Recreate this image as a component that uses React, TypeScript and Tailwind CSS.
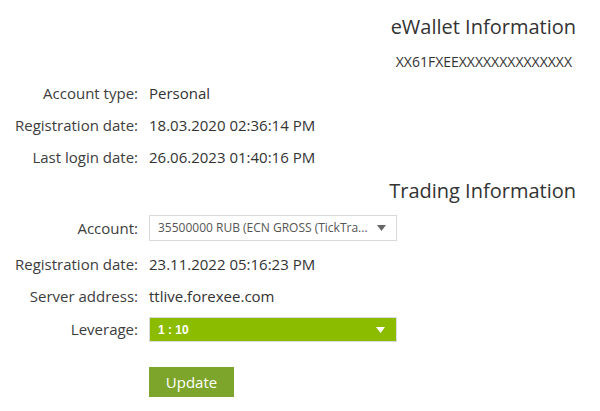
import React from 'react';

const rows1 = [
  { label: 'Account type:', value: 'Personal' },
  { label: 'Registration date:', value: '18.03.2020 02:36:14 PM' },
  { label: 'Last login date:', value: '26.06.2023 01:40:16 PM' },
];

const Caret = ({ className }: { className: string }) => (
  <svg width="9" height="6" viewBox="0 0 9 6" className={className} aria-hidden="true">
    <path d="M0 0 H9 L4.5 6 Z" fill="currentColor" />
  </svg>
);

const Row = ({ label, children, className = 'h-8' }: { label: string; children: React.ReactNode; className?: string }) => (
  <div className={`flex items-center ${className}`}>
    <div className="w-[138px] shrink-0 text-right text-[15px] text-[#3d3d3d] whitespace-nowrap">{label}</div>
    <div className="ml-[11px] flex-1 text-[15px] text-[#333]">{children}</div>
  </div>
);

export default function App() {
  return (
    <div className="w-[600px] h-[411px] bg-white pr-6 pt-[13px] font-['Open_Sans',sans-serif] overflow-hidden">
      <h2 className="text-right text-[20px] leading-[28px] text-[#333]">eWallet Information</h2>
      <div className="mt-[11px] text-right text-[14px] leading-5 text-[#333] pr-[4px]">XX61FXEEXXXXXXXXXXXXXX</div>

      <div className="mt-[5px]">
        {rows1.map((r) => (
          <Row key={r.label} label={r.label}>{r.value}</Row>
        ))}
      </div>

      <h2 className="mt-1 text-right text-[20px] leading-[28px] text-[#333]">Trading Information</h2>

      <div className="mt-[10px]">
        <Row label="Account:" className="h-[26px]">
          <div className="w-[248px] h-[26px] border border-[#d9d9d9] bg-white flex items-center pl-2 pr-[10px]">
            <span className="flex-1 text-[12px] text-[#555] truncate">35500000 RUB (ECN GROSS (TickTra...</span>
            <Caret className="text-[#666] ml-2" />
          </div>
        </Row>
      </div>

      <div className="mt-[7px]">
        <Row label="Registration date:">23.11.2022 05:16:23 PM</Row>
        <Row label="Server address:">ttlive.forexee.com</Row>
      </div>

      <div className="mt-[5px]">
        <Row label="Leverage:" className="h-[25px]">
          <div className="w-[248px] h-[25px] border border-[#dcdcdc] bg-[#8cbc00] flex items-center pl-2 pr-[11px]">
            <span className="flex-1 text-[12px] font-bold text-white font-['Liberation_Sans',sans-serif]">1 : 10</span>
            <Caret className="text-white" />
          </div>
        </Row>
      </div>

      <div className="mt-[25px] ml-[149px]">
        <button className="w-[85px] h-[30px] bg-[#7da42b] text-white text-[15px]">Update</button>
      </div>
    </div>
  );
}
